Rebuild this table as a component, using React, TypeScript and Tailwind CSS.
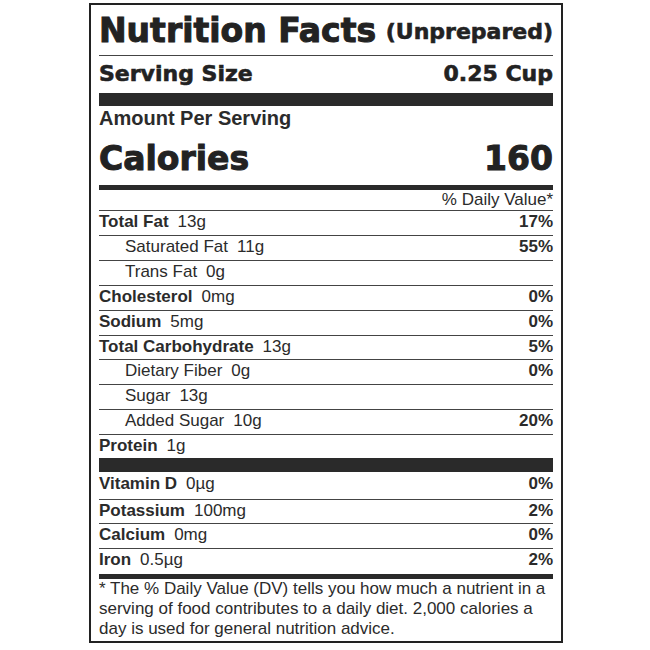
type Row = {
  name: string;
  amount: string;
  dv?: string;
  indent?: boolean;
  h: string;
  line?: boolean;
};

const fatRows: Row[] = [
  { name: "Total Fat", amount: "13g", dv: "17%", h: "h-[25px]", line: true },
  { name: "Saturated Fat", amount: "11g", dv: "55%", indent: true, h: "h-[25px]", line: true },
  { name: "Trans Fat", amount: "0g", indent: true, h: "h-[25px]", line: true },
  { name: "Cholesterol", amount: "0mg", dv: "0%", h: "h-[25px]", line: true },
  { name: "Sodium", amount: "5mg", dv: "0%", h: "h-[25px]", line: true },
  { name: "Total Carbohydrate", amount: "13g", dv: "5%", h: "h-[24px]", line: true },
  { name: "Dietary Fiber", amount: "0g", dv: "0%", indent: true, h: "h-[25px]", line: true },
  { name: "Sugar", amount: "13g", indent: true, h: "h-[25px]", line: true },
  { name: "Added Sugar", amount: "10g", dv: "20%", indent: true, h: "h-[25px]", line: true },
  { name: "Protein", amount: "1g", h: "h-[23px]" },
];

const mineralRows: Row[] = [
  { name: "Vitamin D", amount: "0µg", dv: "0%", h: "h-[28px] pt-[1px]", line: true },
  { name: "Potassium", amount: "100mg", dv: "2%", h: "h-[24px]", line: true },
  { name: "Calcium", amount: "0mg", dv: "0%", h: "h-[25px]", line: true },
  { name: "Iron", amount: "0.5µg", dv: "2%", h: "h-[25px]" },
];

const NutrientRow = ({ row }: { row: Row }) => (
  <div
    className={`flex justify-between leading-[21px] ${row.h} ${
      row.line ? "border-b border-[#444]" : ""
    }`}
  >
    <div className={row.indent ? "pl-[26px]" : ""}>
      {row.indent ? (
        <span>{row.name}</span>
      ) : (
        <span className="font-bold">{row.name}</span>
      )}
      <span className="ml-[9px]">{row.amount}</span>
    </div>
    {row.dv && <span className="font-bold">{row.dv}</span>}
  </div>
);

export default function App() {
  return (
    <div className="w-[650px] h-[650px] bg-white pt-[3px] pl-[89px]">
      <div className="w-[474px] h-[640px] border-2 border-[#222] px-[8px] text-[#2b2b2b] font-['Liberation_Sans',Arial,sans-serif] text-[17px]">
        {/* header */}
        <div className="flex justify-between items-start pt-[9px] h-[51px] border-b border-[#444] font-['DejaVu_Sans',sans-serif] font-bold text-[#222]">
          <span className="text-[33px] leading-[33px] [-webkit-text-stroke:1px_#222]">
            Nutrition Facts
          </span>
          <span className="text-[22px] leading-[36px] [-webkit-text-stroke:0.6px_#222]">
            (Unprepared)
          </span>
        </div>
        <div className="flex justify-between h-[37px] pt-[7px] font-['DejaVu_Sans',sans-serif] font-bold text-[22px] leading-[22px] text-[#222] [-webkit-text-stroke:0.6px_#222]">
          <span>Serving Size</span>
          <span>0.25 Cup</span>
        </div>
        <div className="h-[13px] bg-[#2a2a2a]"></div>

        <div className="pt-[2px] text-[20px] leading-[20px] font-bold">
          Amount Per Serving
        </div>
        <div className="flex justify-between mt-[14px] font-['DejaVu_Sans',sans-serif] font-bold text-[33px] leading-[33px] text-[#222] [-webkit-text-stroke:1px_#222]">
          <span>Calories</span>
          <span>160</span>
        </div>
        <div className="h-[5px] bg-[#2a2a2a] mt-[10px]"></div>

        <div className="h-[21px] leading-[19px] text-right border-b border-[#444]">
          % Daily Value*
        </div>
        {fatRows.map((r) => (
          <NutrientRow key={r.name} row={r} />
        ))}
        <div className="h-[14px] bg-[#2a2a2a]"></div>
        {mineralRows.map((r) => (
          <NutrientRow key={r.name} row={r} />
        ))}
        <div className="h-[5px] bg-[#2a2a2a]"></div>

        <p className="leading-[20px]">
          * The % Daily Value (DV) tells you how much a nutrient in a serving of
          food contributes to a daily diet. 2,000 calories a day is used for
          general nutrition advice.
        </p>
      </div>
    </div>
  );
}
